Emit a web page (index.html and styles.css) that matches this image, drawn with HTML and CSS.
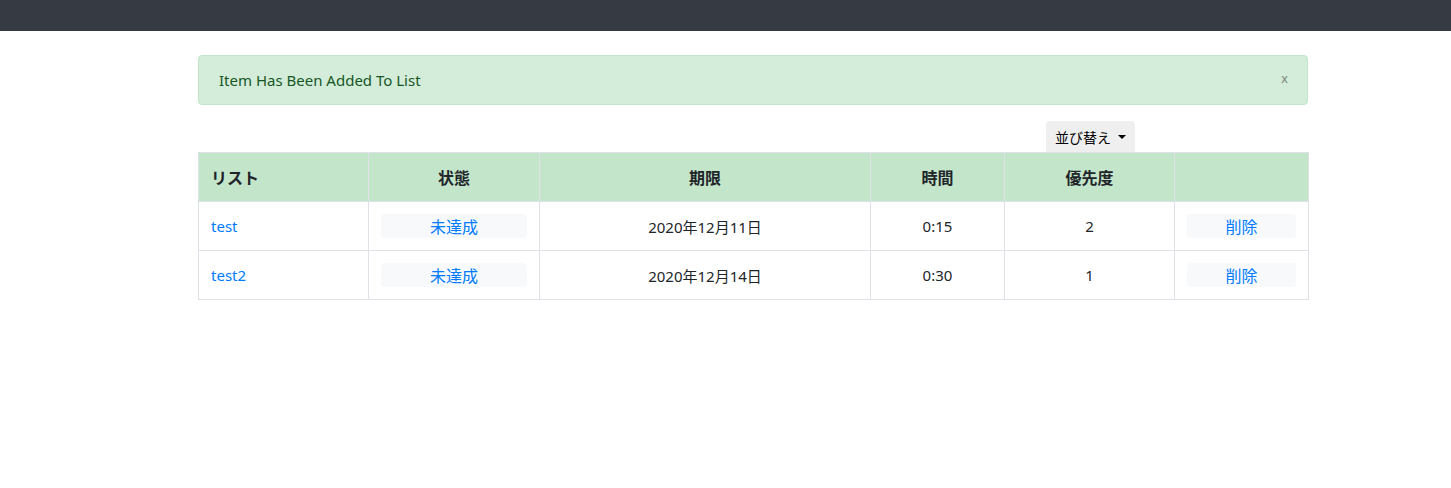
FILE: index.html
```html
<!DOCTYPE html>
<html lang="ja">
<head>
<meta charset="utf-8">
<title>List</title>
<link rel="stylesheet" href="styles.css">
</head>
<body>
<nav class="navbar"></nav>
<main class="container">
  <div class="alert">
    <span>Item Has Been Added To List</span>
    <button class="alert-close" type="button">x</button>
  </div>
  <div class="toolbar">
    <button class="sort-btn" type="button">並び替え <span class="caret"></span></button>
  </div>
  <table class="list-table">
    <colgroup>
      <col class="c1"><col class="c2"><col class="c3"><col class="c4"><col class="c5"><col class="c6">
    </colgroup>
    <thead>
      <tr>
        <th class="left">リスト</th>
        <th>状態</th>
        <th>期限</th>
        <th>時間</th>
        <th>優先度</th>
        <th></th>
      </tr>
    </thead>
    <tbody>
      <tr>
        <td class="left"><a href="#">test</a></td>
        <td><button class="cell-btn" type="button">未達成</button></td>
        <td>2020年12月11日</td>
        <td>0:15</td>
        <td>2</td>
        <td><button class="cell-btn" type="button">削除</button></td>
      </tr>
      <tr>
        <td class="left"><a href="#">test2</a></td>
        <td><button class="cell-btn" type="button">未達成</button></td>
        <td>2020年12月14日</td>
        <td>0:30</td>
        <td>1</td>
        <td><button class="cell-btn" type="button">削除</button></td>
      </tr>
    </tbody>
  </table>
</main>
</body>
</html>
```

FILE: styles.css
```css
* { box-sizing: border-box; }
body {
  margin: 0;
  font-family: "Noto Sans", "Noto Sans CJK JP", sans-serif;
  font-size: 15px;
  color: #212529;
  background: #fff;
}
.navbar {
  height: 31px;
  background: #353a43;
}
.container {
  width: 1110px;
  margin: 24px 0 0 198px;
}
.alert {
  display: flex;
  align-items: center;
  justify-content: space-between;
  height: 50px;
  padding: 0 20px 0 20px;
  background: #d4edda;
  border: 1px solid #c3e6cb;
  border-radius: 4px;
  color: #155724;
  font-size: 15px;
}
.alert-close {
  border: 0;
  background: transparent;
  color: #7d8a80;
  font-family: "DejaVu Sans", sans-serif;
  font-size: 12px;
  padding: 0;
  margin-right: -1px;
  margin-top: -2px;
  cursor: pointer;
}
.toolbar {
  display: flex;
  justify-content: flex-end;
  padding-right: 173px;
  margin-top: 16px;
}
.sort-btn {
  height: 31px;
  width: 89px;
  border: 0;
  border-radius: 4px 4px 0 0;
  background: #efefef;
  color: #000;
  font-family: "Noto Sans CJK JP", sans-serif;
  font-size: 14px;
  padding: 0 6px;
  display: flex;
  align-items: center;
  justify-content: center;
  gap: 4px;
}
.caret {
  display: inline-block;
  width: 0;
  height: 0;
  border-left: 4px solid transparent;
  border-right: 4px solid transparent;
  border-top: 4px solid #000;
  margin-left: 3px;
}
.list-table {
  width: 1110px;
  border-collapse: collapse;
  table-layout: fixed;
}
.c1 { width: 170px; }
.c2 { width: 171px; }
.c3 { width: 331px; }
.c4 { width: 134px; }
.c5 { width: 170px; }
.c6 { width: 134px; }
.list-table th,
.list-table td {
  border: 1px solid #dee2e6;
  height: 49px;
  padding: 0 12px;
  text-align: center;
  vertical-align: middle;
}
.list-table th {
  background: #c3e6cb;
  font-family: "Noto Sans CJK JP", sans-serif;
  font-weight: 700;
  font-size: 16px;
  color: #212529;
}
.list-table td {
  font-size: 15px;
  font-family: "Noto Sans", "Noto Sans CJK JP", sans-serif;
}
.list-table .left { text-align: left; }
.list-table a {
  color: #007bff;
  text-decoration: none;
}
.cell-btn {
  display: block;
  width: 100%;
  height: 24px;
  border: 0;
  border-radius: 4px;
  background: #f8f9fa;
  color: #007bff;
  font-family: "Noto Sans CJK JP", sans-serif;
  font-size: 16px;
  line-height: 24px;
  padding: 0;
}
```
